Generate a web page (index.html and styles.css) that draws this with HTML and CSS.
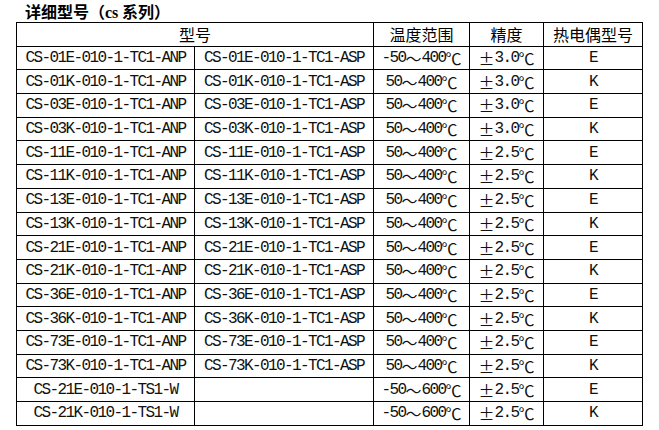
FILE: index.html
```html
<!DOCTYPE html>
<html>
<head>
<meta charset="utf-8">
<link rel="stylesheet" href="styles.css">
</head>
<body>
<div class="title">详细型号（<span class="lat">cs</span> 系列）</div>
<div class="grid">
  <div class="c h span2">型号</div>
  <div class="c h">温度范围</div>
  <div class="c h">精度</div>
  <div class="c h">热电偶型号</div>

  <div class="c">CS-01E-010-1-TC1-ANP</div><div class="c">CS-01E-010-1-TC1-ASP</div><div class="c">-50<span class="w">～</span>400<span class="w">℃</span></div><div class="c"><span class="w">±</span>3.0<span class="w">℃</span></div><div class="c">E</div>
  <div class="c">CS-01K-010-1-TC1-ANP</div><div class="c">CS-01K-010-1-TC1-ASP</div><div class="c">50<span class="w">～</span>400<span class="w">℃</span></div><div class="c"><span class="w">±</span>3.0<span class="w">℃</span></div><div class="c">K</div>
  <div class="c">CS-03E-010-1-TC1-ANP</div><div class="c">CS-03E-010-1-TC1-ASP</div><div class="c">50<span class="w">～</span>400<span class="w">℃</span></div><div class="c"><span class="w">±</span>3.0<span class="w">℃</span></div><div class="c">E</div>
  <div class="c">CS-03K-010-1-TC1-ANP</div><div class="c">CS-03K-010-1-TC1-ASP</div><div class="c">50<span class="w">～</span>400<span class="w">℃</span></div><div class="c"><span class="w">±</span>3.0<span class="w">℃</span></div><div class="c">K</div>
  <div class="c">CS-11E-010-1-TC1-ANP</div><div class="c">CS-11E-010-1-TC1-ASP</div><div class="c">50<span class="w">～</span>400<span class="w">℃</span></div><div class="c"><span class="w">±</span>2.5<span class="w">℃</span></div><div class="c">E</div>
  <div class="c">CS-11K-010-1-TC1-ANP</div><div class="c">CS-11K-010-1-TC1-ASP</div><div class="c">50<span class="w">～</span>400<span class="w">℃</span></div><div class="c"><span class="w">±</span>2.5<span class="w">℃</span></div><div class="c">K</div>
  <div class="c">CS-13E-010-1-TC1-ANP</div><div class="c">CS-13E-010-1-TC1-ASP</div><div class="c">50<span class="w">～</span>400<span class="w">℃</span></div><div class="c"><span class="w">±</span>2.5<span class="w">℃</span></div><div class="c">E</div>
  <div class="c">CS-13K-010-1-TC1-ANP</div><div class="c">CS-13K-010-1-TC1-ASP</div><div class="c">50<span class="w">～</span>400<span class="w">℃</span></div><div class="c"><span class="w">±</span>2.5<span class="w">℃</span></div><div class="c">K</div>
  <div class="c">CS-21E-010-1-TC1-ANP</div><div class="c">CS-21E-010-1-TC1-ASP</div><div class="c">50<span class="w">～</span>400<span class="w">℃</span></div><div class="c"><span class="w">±</span>2.5<span class="w">℃</span></div><div class="c">E</div>
  <div class="c">CS-21K-010-1-TC1-ANP</div><div class="c">CS-21K-010-1-TC1-ASP</div><div class="c">50<span class="w">～</span>400<span class="w">℃</span></div><div class="c"><span class="w">±</span>2.5<span class="w">℃</span></div><div class="c">K</div>
  <div class="c">CS-36E-010-1-TC1-ANP</div><div class="c">CS-36E-010-1-TC1-ASP</div><div class="c">50<span class="w">～</span>400<span class="w">℃</span></div><div class="c"><span class="w">±</span>2.5<span class="w">℃</span></div><div class="c">E</div>
  <div class="c">CS-36K-010-1-TC1-ANP</div><div class="c">CS-36K-010-1-TC1-ASP</div><div class="c">50<span class="w">～</span>400<span class="w">℃</span></div><div class="c"><span class="w">±</span>2.5<span class="w">℃</span></div><div class="c">K</div>
  <div class="c">CS-73E-010-1-TC1-ANP</div><div class="c">CS-73E-010-1-TC1-ASP</div><div class="c">50<span class="w">～</span>400<span class="w">℃</span></div><div class="c"><span class="w">±</span>2.5<span class="w">℃</span></div><div class="c">E</div>
  <div class="c">CS-73K-010-1-TC1-ANP</div><div class="c">CS-73K-010-1-TC1-ASP</div><div class="c">50<span class="w">～</span>400<span class="w">℃</span></div><div class="c"><span class="w">±</span>2.5<span class="w">℃</span></div><div class="c">K</div>
  <div class="c">CS-21E-010-1-TS1-W</div><div class="c"></div><div class="c">-50<span class="w">～</span>600<span class="w">℃</span></div><div class="c"><span class="w">±</span>2.5<span class="w">℃</span></div><div class="c">E</div>
  <div class="c">CS-21K-010-1-TS1-W</div><div class="c"></div><div class="c">-50<span class="w">～</span>600<span class="w">℃</span></div><div class="c"><span class="w">±</span>2.5<span class="w">℃</span></div><div class="c">K</div>
</div>
</body>
</html>
```
FILE: styles.css
```css
html, body {
  margin: 0;
  padding: 0;
  background: #fff;
}
body {
  width: 659px;
  height: 430px;
  overflow: hidden;
  color: #000;
}
.title {
  box-sizing: border-box;
  height: 22px;
  padding-top: 1px;
  line-height: 20px;
  padding-left: 25px;
  font-family: "Noto Sans CJK SC", sans-serif;
  font-weight: bold;
  font-size: 16px;
}
.title .lat {
  font-family: "Liberation Serif", serif;
  font-weight: bold;
}
.grid {
  margin-left: 16px;
  width: 627px;
  box-sizing: border-box;
  display: grid;
  grid-template-columns: 177px 178px 95px 73px 98px;
  grid-auto-rows: 22.7px;
  gap: 1px;
  padding: 1px;
  background: #000;
}
.c {
  background: #fff;
  display: flex;
  align-items: center;
  justify-content: center;
  white-space: nowrap;
  font-family: "Liberation Mono", "Noto Sans CJK SC", monospace;
  font-size: 16px;
  letter-spacing: -1.6px;
  color: #111;
}
.c.h {
  font-family: "Noto Sans CJK SC", sans-serif;
  letter-spacing: 0;
  font-size: 16px;
  color: #000;
}
.span2 {
  grid-column: span 2;
}
.w {
  font-family: "Noto Sans CJK SC", sans-serif;
  letter-spacing: 0;
}
```
